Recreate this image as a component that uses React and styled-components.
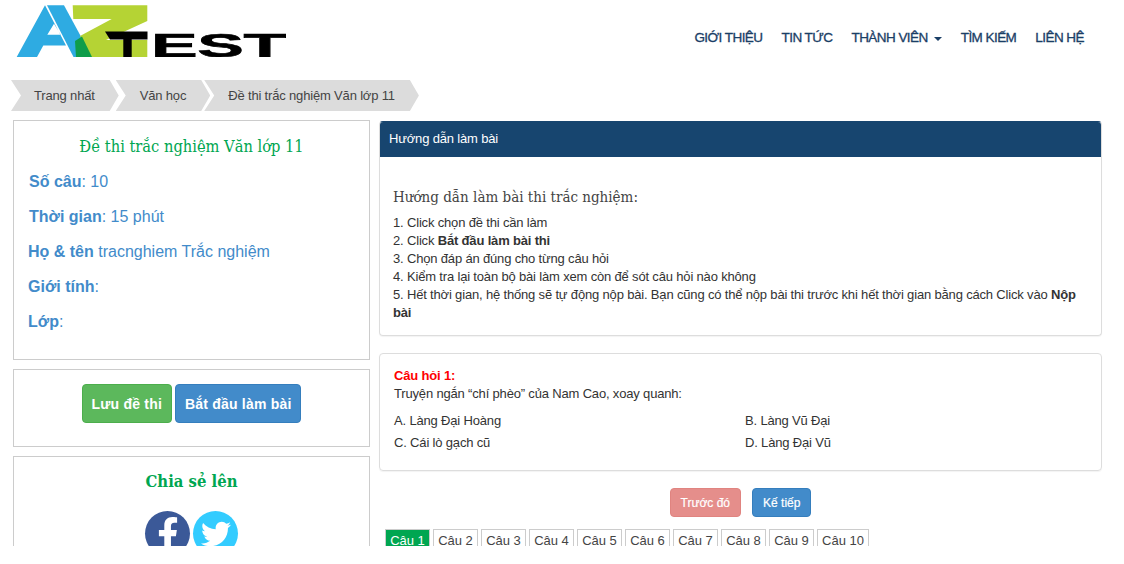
import React from "react";
import styled, { createGlobalStyle } from "styled-components";
import { FaFacebookF, FaTwitter } from "react-icons/fa";

const Global = createGlobalStyle`
  html, body { margin: 0; padding: 0; background: #fff; }
  body { font-family: "Liberation Sans", Arial, sans-serif; font-size: 13px; letter-spacing: -0.17px; line-height: 18px; color: #333; }
`;
const slab = `"DejaVu Serif Condensed", "DejaVu Serif", "Liberation Serif", serif`;

const Page = styled.div`height: 546px; overflow: hidden;`;
const Header = styled.header`
  height: 75px; display: flex; justify-content: space-between; align-items: flex-start;
  padding: 5px 40px 0 16px; box-sizing: border-box;
`;
const Nav = styled.nav`display: flex; gap: 19px; padding-top: 24px;`;
const NavItem = styled.a`
  font-size: 13.5px; letter-spacing: -0.55px; color: #1a3e66; line-height: 18px; -webkit-text-stroke: 0.3px #1a3e66;
  display: flex; align-items: center; gap: 6px;
`;
const Caret = styled.span`
  width: 0; height: 0; border-left: 4px solid transparent; border-right: 4px solid transparent; border-top: 4px solid #1a3e66;
  margin-top: 2px;
`;
const Crumbs = styled.div`display: flex; margin: 5px 0 9px 11px; height: 31px;`;
const Crumb = styled.div`
  height: 31px; line-height: 31px; background: #dcdcdc; color: #444; padding: 0 24px; margin-left: ${(p) => p.$pull}px;
  clip-path: polygon(0 0, calc(100% - 9px) 0, 100% 50%, calc(100% - 9px) 100%, 0 100%, 10px 50%);
  &:first-child { padding-left: 23px; }
`;
const Columns = styled.div`display: grid; grid-template-columns: 357px 723px; gap: 9px; padding-left: 13px;`;
const Side = styled.aside`display: flex; flex-direction: column; gap: 9px;`;
const Box = styled.section`border: 1px solid #ccc; box-sizing: border-box;`;
const InfoBox = styled(Box)`height: 240px; padding: 16px 14px 0; display: flex; flex-direction: column;`;
const InfoTitle = styled.h2`
  margin: 0 0 15px; font: 400 16.3px/20px ${slab}; letter-spacing: 0; color: #00a651; text-align: center;
`;
const InfoRow = styled.div`
  font-size: 16px; letter-spacing: 0; line-height: 20px; color: #428bca; margin-bottom: 15px; padding-left: ${(p) => (p.$nudge ? "1px" : "0")};
  b { font-weight: 700; }
`;
const ActionBox = styled(Box)`height: 78px; display: flex; justify-content: center; padding-top: 14px; gap: 3px;`;
const ActionButton = styled.button`
  height: 39px; padding: 0 9px; border-radius: 4px; border: 1px solid ${(p) => p.$border}; background: ${(p) => p.$bg}; color: #fff;
  font: 700 14px "Liberation Sans", sans-serif; letter-spacing: 0.2px;
`;
const ShareBox = styled(Box)`height: 140px; text-align: center; padding-top: 14px;`;
const ShareTitle = styled.h3`margin: 0 0 18px; font: 700 16.5px/22px ${slab}; letter-spacing: 0; color: #00a651;`;
const ShareIcons = styled.div`display: flex; justify-content: center; gap: 3px;`;
const Round = styled.span`
  width: 45px; height: 45px; border-radius: 50%; background: ${(p) => p.$bg}; color: #fff; display: flex; align-items: center; justify-content: center;
  font-size: ${(p) => p.$size}px;
`;
const Main = styled.main`display: flex; flex-direction: column; padding-top: 1px;`;
const Panel = styled.section`
  border: 1px solid #ddd; border-radius: 4px; box-shadow: 0 1px 1px rgba(0,0,0,.05); overflow: hidden; box-sizing: border-box;
`;
const GuidePanel = styled(Panel)`height: 215px; margin-bottom: 17px; border-top-color: #17456f;`;
const PanelHead = styled.div`
  height: 35px; line-height: 33px; background: #17456f; color: #fff; padding: 0 9px;
`;
const GuideBody = styled.div`padding: 30px 13px 0;`;
const GuideTitle = styled.h4`margin: 0 0 7px; font: 400 15px/20px ${slab}; letter-spacing: 0; color: #444;`;
const GuideLine = styled.div`line-height: 18px; color: #333; b { font-weight: 700; }`;
const QuestionPanel = styled(Panel)`height: 118px; padding: 13px 14px 0; margin-bottom: 17px;`;
const QLabel = styled.div`color: #f00; font-weight: 700; line-height: 18px;`;
const QText = styled.div`line-height: 18px; margin-bottom: 9px;`;
const Options = styled.div`display: grid; grid-template-columns: 351px 1fr; row-gap: 4px;`;
const Option = styled.div`line-height: 18px;`;
const Pager = styled.div`display: flex; justify-content: center; gap: 11px; margin-bottom: 12px;`;
const PageButton = styled.button`
  height: 29px; padding: 0 10px; border-radius: 4px; border: 1px solid ${(p) => p.$border}; background: ${(p) => p.$bg}; color: #fff; font: 400 12px "Liberation Sans", sans-serif;
  -webkit-text-stroke: 0.2px #fff;
`;
const Tabs = styled.div`display: flex; gap: 3px; padding-left: 6px;`;
const Tab = styled.div`
  height: 24px; border: 1px solid #ccc; border-bottom: 0; text-align: center; line-height: 22px; letter-spacing: 0; white-space: nowrap;
  box-sizing: border-box; width: ${(p) => (p.$wide ? "52px" : "45px")};
  background: ${(p) => (p.$on ? "#00a651" : "#fff")}; color: ${(p) => (p.$on ? "#fff" : "#444")};
`;
const LogoSvg = styled.svg`display: block;`;

const Logo = () => (
  <LogoSvg width="270" height="52" viewBox="16 5 270 52">
    <path fill="#2eabe2" fillRule="evenodd" d="M16.7 57 45 5.3 66 45.5 43.3 45.5 37 57ZM47.3 34.7 54 23.7 60.7 34.7Z" />
    <polygon fill="#2eabe2" points="47,5.3 64,5.3 92,57 73.5,57" />
    <polygon fill="#b5d334" points="72.7,5.3 147.3,5.3 147.3,21 106,40 147.3,40 147.3,57 90.7,57 80,36 111.7,19 73.3,19" />
    <polygon fill="#0f9d4a" points="75,41 82,36.5 92,57 76,57" />
    <polygon fill="#000" points="105,31.5 147.5,31.5 147.5,39.5 131.7,39.5 131.7,57 123.3,57 123.3,39.5 110,39.5" />
    <text x="151" y="57" fontFamily="Liberation Sans, sans-serif" fontWeight="700" fontSize="34" textLength="135" lengthAdjust="spacingAndGlyphs" fill="#000" stroke="#000" strokeWidth="0.6">EST</text>
  </LogoSvg>
);

const names = ["GIỚI THIỆU", "TIN TỨC", "THÀNH VIÊN", "TÌM KIẾM", "LIÊN HỆ"];

export default function App() {
  return (
    <Page>
      <Global />
      <Header>
        <Logo />
        <Nav>
          {names.map((n) => (
            <NavItem key={n}>{n}{n === "THÀNH VIÊN" && <Caret />}</NavItem>
          ))}
        </Nav>
      </Header>
      <Crumbs>
        <Crumb $pull={0}>Trang nhất</Crumb>
        <Crumb $pull={-3}>Văn học</Crumb>
        <Crumb $pull={-6}>Đề thi trắc nghiệm Văn lớp 11</Crumb>
      </Crumbs>
      <Columns>
        <Side>
          <InfoBox>
            <InfoTitle>Đề thi trắc nghiệm Văn lớp 11</InfoTitle>
            <InfoRow $nudge><b>Số câu</b>: 10</InfoRow>
            <InfoRow $nudge><b>Thời gian</b>: 15 phút</InfoRow>
            <InfoRow><b>Họ &amp; tên</b> tracnghiem Trắc nghiệm</InfoRow>
            <InfoRow><b>Giới tính</b>:</InfoRow>
            <InfoRow><b>Lớp</b>:</InfoRow>
          </InfoBox>
          <ActionBox>
            <ActionButton $bg="#5cb85c" $border="#4cae4c">Lưu đề thi</ActionButton>
            <ActionButton $bg="#428bca" $border="#357ebd">Bắt đầu làm bài</ActionButton>
          </ActionBox>
          <ShareBox>
            <ShareTitle>Chia sẻ lên</ShareTitle>
            <ShareIcons>
              <Round $bg="#3b5998" $size={34}><FaFacebookF /></Round>
              <Round $bg="#33ccff" $size={30}><FaTwitter /></Round>
            </ShareIcons>
          </ShareBox>
        </Side>
        <Main>
          <GuidePanel>
            <PanelHead>Hướng dẫn làm bài</PanelHead>
            <GuideBody>
              <GuideTitle>Hướng dẫn làm bài thi trắc nghiệm:</GuideTitle>
              <GuideLine>1. Click chọn đề thi cần làm</GuideLine>
              <GuideLine>2. Click <b>Bắt đầu làm bài thi</b></GuideLine>
              <GuideLine>3. Chọn đáp án đúng cho từng câu hỏi</GuideLine>
              <GuideLine>4. Kiểm tra lại toàn bộ bài làm xem còn để sót câu hỏi nào không</GuideLine>
              <GuideLine>5. Hết thời gian, hệ thống sẽ tự động nộp bài. Bạn cũng có thể nộp bài thi trước khi hết thời gian bằng cách Click vào <b>Nộp bài</b></GuideLine>
            </GuideBody>
          </GuidePanel>
          <QuestionPanel>
            <QLabel>Câu hỏi 1:</QLabel>
            <QText>Truyện ngắn “chí phèo” của Nam Cao, xoay quanh:</QText>
            <Options>
              <Option>A. Làng Đại Hoàng</Option>
              <Option>B. Làng Vũ Đại</Option>
              <Option>C. Cái lò gạch cũ</Option>
              <Option>D. Làng Đại Vũ</Option>
            </Options>
          </QuestionPanel>
          <Pager>
            <PageButton $bg="#e58e8b" $border="#e08480">Trước đó</PageButton>
            <PageButton $bg="#428bca" $border="#357ebd">Kế tiếp</PageButton>
          </Pager>
          <Tabs>
            {Array.from({ length: 10 }, (_, i) => (
              <Tab key={i} $on={i === 0} $wide={i === 9}>Câu {i + 1}</Tab>
            ))}
          </Tabs>
        </Main>
      </Columns>
    </Page>
  );
}
